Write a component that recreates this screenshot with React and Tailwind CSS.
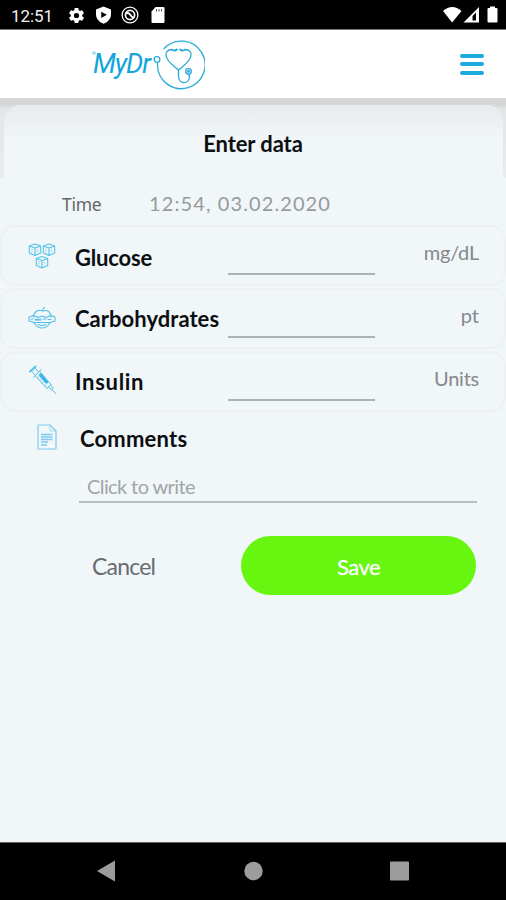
import React from "react";

const LATO = "font-['Lato','Liberation_Sans',sans-serif]";

function StatusBar() {
  return (
    <div className="flex h-[30px] w-full items-center border-b border-[#777] bg-black pl-[11px] pr-[8px] text-white">
      <span className="mt-[3px] w-[42px] whitespace-nowrap font-['Roboto',sans-serif] text-[17px] leading-[20px] tracking-[-0.1px] text-[#f0f0f0]">12:51</span>
      <svg className="ml-[14px] mt-px h-[19px] w-[19px]" viewBox="0 0 24 24" fill="#fff">
        <path d="M19.14 12.94c.04-.3.06-.61.06-.94s-.02-.64-.07-.94l2.03-1.58a.49.49 0 0 0 .12-.61l-1.92-3.32a.49.49 0 0 0-.59-.22l-2.39.96a7 7 0 0 0-1.62-.94l-.36-2.54a.48.48 0 0 0-.48-.41h-3.84a.48.48 0 0 0-.47.41l-.36 2.54c-.59.24-1.13.57-1.62.94l-2.39-.96a.48.48 0 0 0-.59.22L2.74 8.87a.48.48 0 0 0 .12.61l2.03 1.58a6 6 0 0 0 0 1.88l-2.03 1.58a.49.49 0 0 0-.12.61l1.92 3.32c.12.22.37.29.59.22l2.39-.96c.5.38 1.03.7 1.62.94l.36 2.54c.05.24.24.41.48.41h3.84c.24 0 .44-.17.47-.41l.36-2.54c.59-.24 1.13-.56 1.62-.94l2.39.96c.22.08.47 0 .59-.22l1.92-3.32a.48.48 0 0 0-.12-.61zM12 15.300A3.300 3.300 0 1 1 12 8.700a3.300 3.300 0 0 1 0 6.600" />
      </svg>
      <svg className="ml-[8px] mt-px h-[18px] w-[19px]" viewBox="0 0 24 24">
        <path d="M12 0.500 22 4.500v6.500c0 6-4.200 10.500-10 12.500C6.200 21.500 2 17 2 11V4.500z" fill="#fff" />
        <path d="M9 7.500v8.500l7.500-4.250z" fill="#000" />
      </svg>
      <svg className="ml-[8px] mt-px h-[18px] w-[18px]" viewBox="0 0 18 18" fill="none" stroke="#fff">
        <circle cx="9" cy="9" r="7.900" strokeWidth="1.300" />
        <circle cx="9" cy="9" r="4.600" strokeWidth="1.700" />
        <path d="M5 7.500Q7.500 6 9 8.500t4 3.500" strokeWidth="1.900" />
      </svg>
      <svg className="ml-[12px] mt-px h-[16px] w-[14px]" viewBox="0 0 14 16">
        <path d="M4.600 0H12.500Q13.500 0 13.500 1V15Q13.500 16 12.500 16H1.500Q.5 16 .5 15V4.500z" fill="#fff" />
        <path d="M5.500 2v2.500M8 2v2.500M10.500 2v2.500" stroke="#555" strokeWidth="1" />
      </svg>
      <svg className="ml-auto mt-px h-[18px] w-[55px]" viewBox="0 0 55 18">
        <path d="M0 5Q9.200-3 18.500 5L9.200 16.500z" fill="#fff" />
        <path d="M20.500 16.500 36 1v15.500zM29.500 14.500V10l3.500-3.500V14.500z" fill="#fff" fillRule="evenodd" />
        <path d="M45.500 2H47V.5h5V2H53.500Q54.500 2 54.500 3V15.500Q54.500 16.500 53.500 16.500H45.500Q44.500 16.500 44.500 15.500V3Q44.500 2 45.500 2" fill="#fff" />
      </svg>
    </div>
  );
}

function Header() {
  return (
    <header className="flex h-[68px] w-full items-center bg-white pl-[92px] pr-[22px]">
      <svg className="-mr-[3px] mt-[21px] h-1 w-1 self-start" viewBox="0 0 4 4" fill="none" stroke="#6cc6e8" strokeWidth=".9">
        <circle cx="2" cy="2" r="1.300" />
      </svg>
      <span className="w-[58px] whitespace-nowrap font-['Roboto','Liberation_Sans',sans-serif] text-[27px] italic leading-[32px] tracking-[-1.100px] text-[#12a5dc]">MyDr</span>
      <svg className="-mt-[2px] h-[54px] w-[54px]" viewBox="0 0 54 54" fill="none" stroke="#27a9d8" strokeWidth="1.300" strokeLinecap="round" strokeLinejoin="round">
        <path d="M13 12.500A23.800 23.800 0 1 1 6.500 29.500V27" />
        <circle cx="6" cy="23.500" r="2.900" />
        <path d="M21 13.500C16 13.500 14.500 17 15 19.500 16 26 22 29 27.500 34 33 29 39 26 40 19.500 40.500 17 39 13.500 34 13.500M27.500 34v6c0 9 11 8.500 11 0.500l-.5-2" />
        <path d="M21 13.800q2.500 1.500 5-.3M29 13.500q2.500 1.800 5 .3" strokeWidth="1.900" />
        <circle cx="37.500" cy="35.500" r="2.800" />
        <circle cx="37.500" cy="35.500" r=".8" />
      </svg>
      <div className="ml-auto flex w-[24px] flex-col gap-[4.500px]">
        <div className="h-1 rounded-full bg-[#1babdc]" />
        <div className="h-1 rounded-full bg-[#1babdc]" />
        <div className="h-1 rounded-full bg-[#1babdc]" />
      </div>
    </header>
  );
}

function Cube({ x, y }) {
  return (
    <g transform={`translate(${x} ${y})`}>
      <path d="M6 .5 11.700 2.500V9.500L6 12 .3 9.500V2.500zM.3 2.500 6 4.500 11.700 2.500M6 4.500V12" />
      <path d="M3 5v4M8.500 5.500v3" strokeWidth=".5" />
    </g>
  );
}

function GlucoseIcon() {
  return (
    <svg className="h-[26px] w-[28px]" viewBox="0 0 28 26" fill="none" stroke="#55c2eb" strokeWidth="1.100" strokeLinejoin="round">
      <Cube x={1} y={0.500} />
      <Cube x={15} y={0.500} />
      <Cube x={8} y={13} />
    </svg>
  );
}

function CarbsIcon() {
  return (
    <svg className="-mt-[3px] h-[22px] w-[28px]" viewBox="0 0 28 22" fill="none" stroke="#4fbfe9" strokeWidth="1.050" strokeLinecap="round" strokeLinejoin="round">
      <path d="M5.500 10C6 4 11 2 15 4c5-2 8 2 8 6M15 4q-.5-2 1.500-3.500" />
      <path d="M1 10l4-1.500 5 2 4-1.500 4 1.500 5-2 4 1.500v4l-5 1.500H6L1 14z" />
      <path d="M3 12h2M7 12l1 1.500L9 12l1 1.500 1-1.500 1 1.500 1-1.500M15 12h3M20 12.500h3" />
      <path d="M6 15.500c2 4 5 5.500 8 5.500s6-1.500 8-5.500M10 17.500q4 2 8 0" />
    </svg>
  );
}

function SyringeIcon() {
  return (
    <svg className="-mt-[4px] ml-px h-[30px] w-[28px]" viewBox="0 0 28 30" fill="none" stroke="#55c2eb" strokeWidth="1" strokeLinecap="round" strokeLinejoin="round">
      <path d="M1 6.500 6.500 1.500" strokeWidth="2" />
      <path d="M3 6.500l3 3.500M6.500 3.500l3 3.500M4.500 12.500 12 4.500M6.500 11 18 23.500M11 6.500 22 19.500M18 23.500l4-4M20 22l2.500 3 1.500-1.500-2-3M23 24.500l3.500 4" />
      <path d="M11.500 10l6 7" strokeWidth="3.200" stroke="#35b7e7" />
      <path d="M8 13l1.500-1M10.500 15.500l1.500-1M13 18l1.500-1M15.500 21l1.500-1" strokeWidth=".7" />
    </svg>
  );
}

function DocumentIcon() {
  return (
    <svg className="h-[26px] w-[20px]" viewBox="0 0 20 26" fill="none" stroke="#7bcbed" strokeWidth="1.200" strokeLinejoin="round">
      <path d="M1 1.500Q1 1 1.500 1H13l6 6v17.500q0 .5-.5.5h-17Q1 25 1 24.500z" />
      <path d="M13 1v6h6" strokeWidth=".6" />
      <path d="M4 10.500h11.500M4 13h11.500M4 15.500h11.500M4 18h7M4 21h6" strokeWidth="1.400" />
      <path d="M13 20.500h3v2.500h-3z" fill="#fff" stroke="none" />
    </svg>
  );
}

function EntryCard({ icon, label, labelClass, unit, unitClass }) {
  return (
    <section className={`flex h-[61px] w-full rounded-[15px] border-2 border-[#eef1f3] bg-[#f1f6f9] pl-[26px] pr-[25px] ${LATO}`}>
      <div className="flex h-[58px] w-[47px] items-center">{icon}</div>
      <h2 className={`w-[153px] whitespace-nowrap text-[22px] font-bold text-[#0c0f11] ${labelClass}`}>{label}</h2>
      <div className="mt-[46px] h-[1.500px] w-[147px] bg-[#adb2b5]" />
      <span className={`ml-auto whitespace-nowrap text-[20px] leading-[50px] text-[#85898c] ${unitClass}`}>{unit}</span>
    </section>
  );
}

export default function App() {
  return (
    <div className="flex h-[900px] w-[506px] flex-col overflow-hidden bg-[#f1f6f9]">
      <StatusBar />
      <Header />
      <main className={`flex h-[744px] w-full flex-col ${LATO}`}>
        <div className="h-[80px] bg-gradient-to-b from-[#d5d7d7] from-[8%] via-[#e3e5e6] via-[14%] to-[#e9ecee] px-[3.500px] pt-[7px]">
          <h1 className="h-[73px] rounded-t-[16px] bg-gradient-to-b from-[#e7ebed] to-[#f1f6f9] to-50% pt-[24px] text-center text-[22px] font-bold leading-[30px] tracking-[-0.100px] text-[#0c0f11]">Enter data</h1>
        </div>
        <div className="flex h-[47px] pl-[62px] pt-[11px] leading-[30px]">
          <span className="w-[87px] font-['Noto_Sans',sans-serif] text-[17.500px] tracking-[-0.250px] text-[#65696b]">Time</span>
          <span className="-mt-px whitespace-nowrap text-[20px] tracking-[1.100px] text-[#969a9d]">12:54, 03.02.2020</span>
        </div>
        <div className="flex flex-col gap-[2px]">
          <EntryCard icon={<GlucoseIcon />} label="Glucose" labelClass="tracking-[-0.150px] leading-[61px]" unit="mg/dL" unitClass="tracking-[-0.200px]" />
          <EntryCard icon={<CarbsIcon />} label="Carbohydrates" labelClass="tracking-[0.050px] leading-[58px]" unit="pt" unitClass="" />
          <EntryCard icon={<SyringeIcon />} label="Insulin" labelClass="tracking-[0.700px] leading-[58px]" unit="Units" unitClass="tracking-[-0.250px]" />
        </div>
        <div className="flex h-[50px] items-center pl-[37px]">
          <DocumentIcon />
          <h2 className="ml-[23px] mt-[3px] text-[22px] font-bold leading-[30px] tracking-[0.200px] text-[#0c0f11]">Comments</h2>
        </div>
        <div className="ml-[79px] mt-[8px] h-[33px] w-[398px] border-b-2 border-[#b9bec1] pl-[8px] text-[20px] leading-[32px] tracking-[-0.600px] text-[#a0a5a8]">Click to write</div>
        <div className="mt-[33px] flex h-[59px] pl-[92px]">
          <button className="w-[149px] pt-px text-left text-[23px] tracking-[-0.800px] text-[#686c6f]">Cancel</button>
          <button className="w-[235px] rounded-full bg-[#66f60f] pt-[2px] text-[22px] tracking-[-0.500px] text-white [-webkit-text-stroke:0.300px_white]">Save</button>
        </div>
      </main>
      <nav className="flex h-[58px] w-full items-center border-t border-[#666] bg-black pb-px pl-[97px]">
        <svg className="h-[22px] w-[312px]" viewBox="0 0 312 22" fill="#9c9c9c">
          <path d="M0 11 18 .5v21z" />
          <circle cx="156.500" cy="11" r="9.200" />
          <rect x="293" y="1.500" width="19" height="19" rx="1" />
        </svg>
      </nav>
    </div>
  );
}
